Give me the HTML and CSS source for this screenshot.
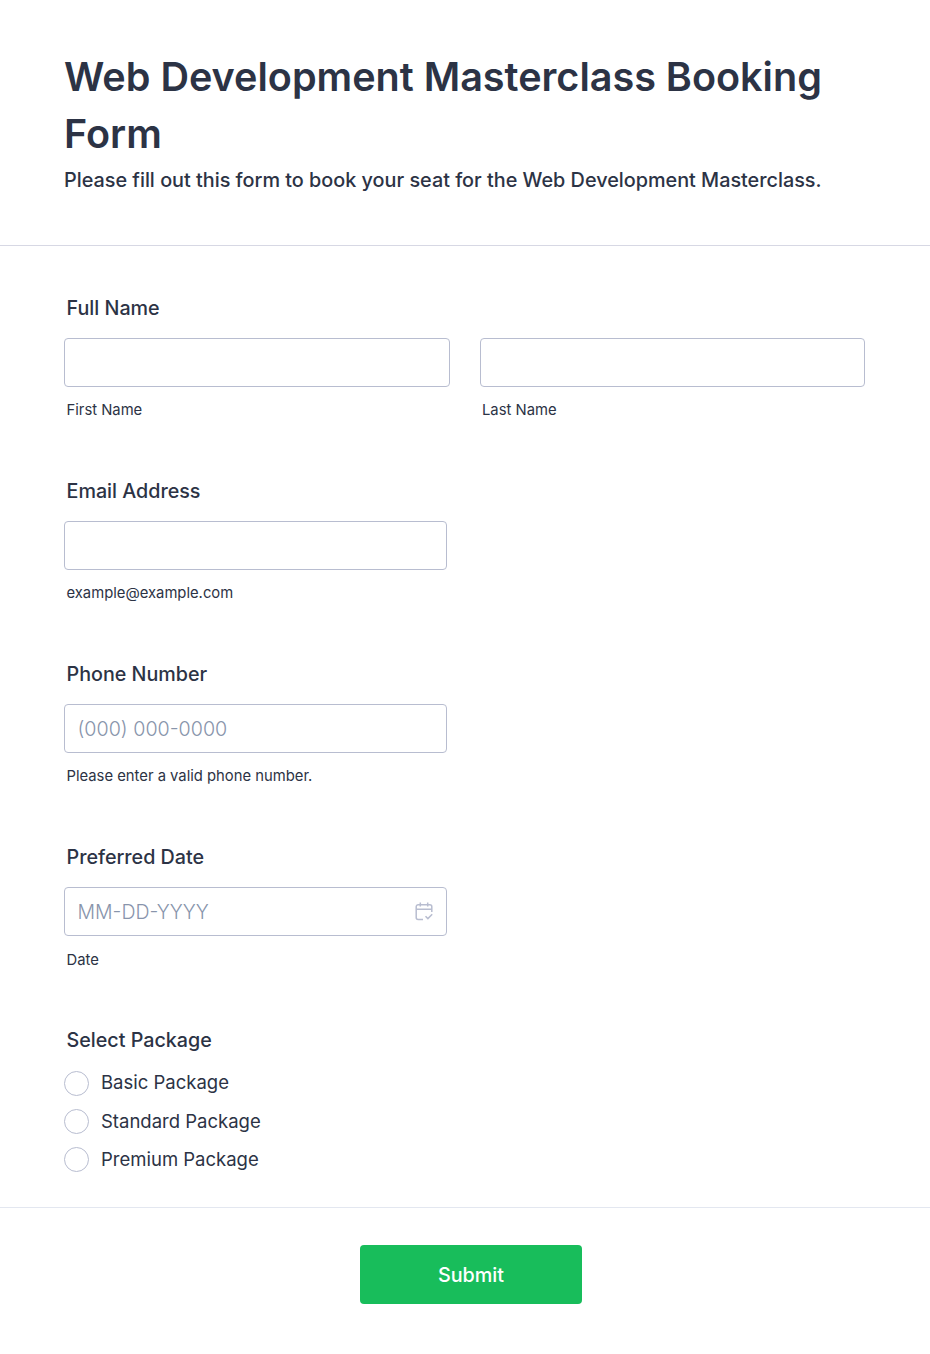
FILE: index.html
```html
<!DOCTYPE html>
<html lang="en">
<head>
    <meta charset="UTF-8">
    <title>Web Development Masterclass Booking Form</title>
    <link rel="stylesheet" href="styles.css">
</head>
<body>
    <form class="booking-form">
        <header class="form-header">
            <h1>Web Development Masterclass Booking Form</h1>
            <p>Please fill out this form to book your seat for the Web Development Masterclass.</p>
        </header>

        <div class="form-body">
            <div class="form-row">
                <label class="row-label" for="firstName">Full Name</label>
                <div class="name-fields">
                    <div class="field">
                        <input type="text" id="firstName" name="firstName">
                        <label class="sub-label" for="firstName">First Name</label>
                    </div>
                    <div class="field">
                        <input type="text" id="lastName" name="lastName">
                        <label class="sub-label" for="lastName">Last Name</label>
                    </div>
                </div>
            </div>

            <div class="form-row">
                <label class="row-label" for="email">Email Address</label>
                <div class="field half">
                    <input type="email" id="email" name="email">
                    <label class="sub-label" for="email">example@example.com</label>
                </div>
            </div>

            <div class="form-row">
                <label class="row-label" for="phone">Phone Number</label>
                <div class="field half">
                    <input type="tel" id="phone" name="phone" placeholder="(000) 000-0000">
                    <label class="sub-label" for="phone">Please enter a valid phone number.</label>
                </div>
            </div>

            <div class="form-row date-row">
                <label class="row-label" for="date">Preferred Date</label>
                <div class="field half">
                    <div class="date-input">
                        <input type="text" id="date" name="date" placeholder="MM-DD-YYYY">
                        <svg class="calendar-icon" width="20" height="20" viewBox="0 0 20 20">
                            <path d="M9 18.5H4.2a2 2 0 0 1-2-2V5.7a2 2 0 0 1 2-2h11.6a2 2 0 0 1 2 2V11M2.2 8.3h15.6M6.3 1.5v4M13.7 1.5v4M11.5 15.2l2.4 2.4 4.3-4.4"/>
                        </svg>
                    </div>
                    <label class="sub-label" for="date">Date</label>
                </div>
            </div>

            <div class="form-row packages">
                <span class="row-label">Select Package</span>
                <label class="option"><input type="radio" name="package" value="basic"><span>Basic Package</span></label>
                <label class="option"><input type="radio" name="package" value="standard"><span>Standard Package</span></label>
                <label class="option"><input type="radio" name="package" value="premium"><span>Premium Package</span></label>
            </div>
        </div>

        <div class="form-footer">
            <button type="submit">Submit</button>
        </div>
    </form>
</body>
</html>
```
FILE: styles.css
```css
* {
    box-sizing: border-box;
}

body {
    margin: 0;
    background-color: #fff;
    color: #2c3345;
    font-family: Inter, sans-serif;
}

.form-header {
    height: 246px;
    padding: 49px 64px 0;
    border-bottom: 1px solid #d7d8e4;
}

h1 {
    margin: 0;
    font-size: 39.55px;
    line-height: 57px;
    font-weight: 600;
}

.form-header p {
    margin: 5px 0 0;
    font-size: 19.81px;
    line-height: 24px;
    font-weight: 500;
    white-space: nowrap;
}

.form-body {
    padding: 50px 65px 0 64px;
}

.form-row {
    height: 183px;
}

.row-label {
    display: block;
    margin: 0 0 17.5px 2.5px;
    font-size: 19.72px;
    line-height: 24px;
    font-weight: 500;
}

.name-fields {
    display: flex;
    gap: 30px;
}

.field {
    flex: 1;
}

.half {
    width: 383px;
}

.field input {
    display: block;
    width: 100%;
    height: 49.5px;
    padding: 1px 12.5px 0;
    border: 1px solid #b8bdd0;
    border-radius: 4px;
    background-color: #fff;
    color: #2c3345;
    font-family: inherit;
    font-size: 19.7px;
}

.field input::placeholder {
    color: #8894ab;
    font-weight: 300;
}

.date-input input {
    font-size: 19.5px;
}

.sub-label {
    display: block;
    margin: 13px 0 0 2.5px;
    font-size: 14.8px;
    line-height: 20px;
}

.date-row .sub-label {
    margin-top: 14px;
}

.date-input {
    position: relative;
}

.calendar-icon {
    position: absolute;
    top: 14px;
    right: 13px;
    fill: none;
    stroke: #b8bdd0;
    stroke-width: 1.5;
}

.packages {
    height: 179px;
}

.packages .row-label {
    margin-bottom: 12px;
}

.option {
    display: flex;
    align-items: center;
    gap: 12px;
    height: 38.4px;
    font-size: 18.5px;
    line-height: 24px;
}

.option span {
    padding-bottom: 2px;
}

.option input {
    appearance: none;
    width: 25px;
    height: 25px;
    margin: 0;
    border: 1px solid #b8bdd0;
    border-radius: 50%;
}

.option input:checked {
    border: 7px solid #18bd5b;
}

.form-footer {
    display: flex;
    justify-content: center;
    padding: 37px 0 49px 12px;
    border-top: 1px solid #e3e7f0;
}

button {
    width: 222px;
    height: 59px;
    border: none;
    border-radius: 4px;
    background-color: #18bd5b;
    color: #fff;
    font-family: inherit;
    font-size: 19.8px;
    font-weight: 500;
}
```
